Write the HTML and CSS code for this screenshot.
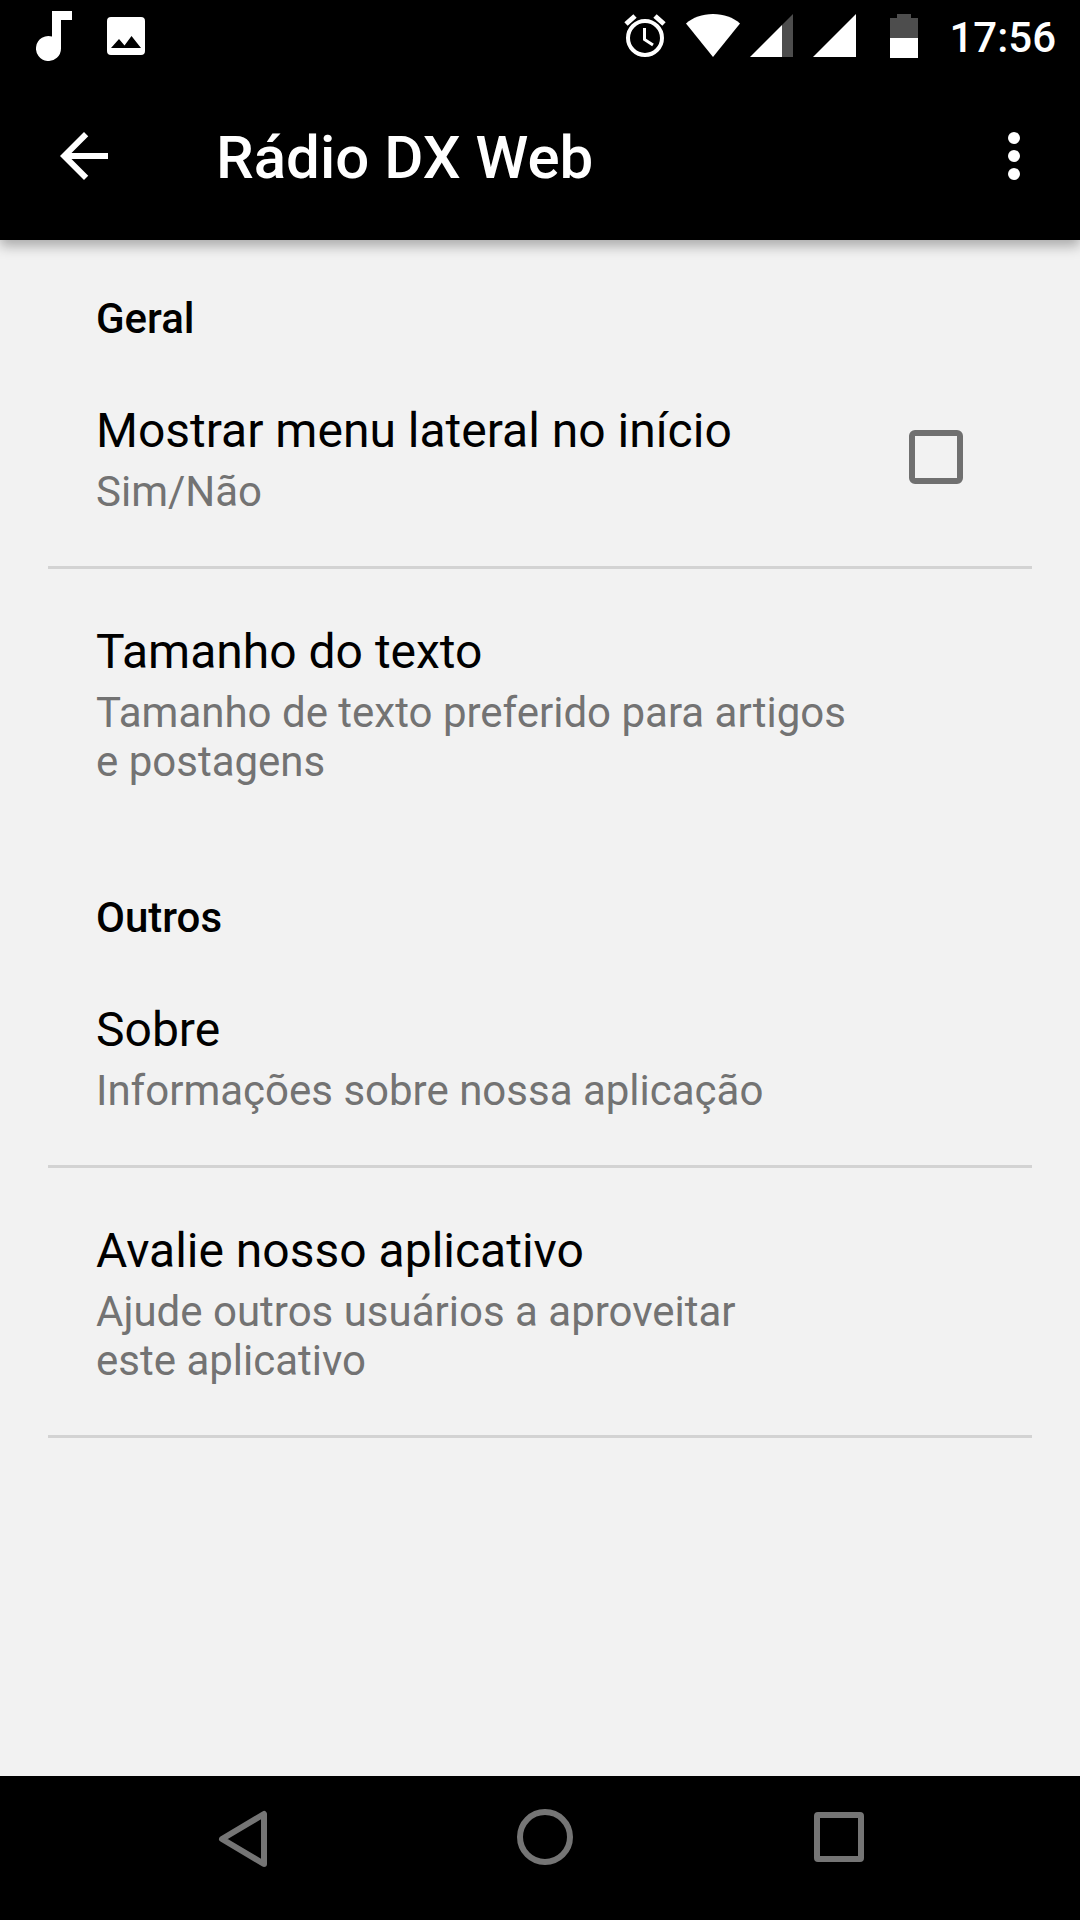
FILE: index.html
```html
<!DOCTYPE html>
<html lang="pt-BR">
<head>
    <meta charset="UTF-8">
    <meta name="viewport" content="width=device-width, initial-scale=1.0">
    <title>Rádio DX Web</title>
    <link rel="stylesheet" href="styles.css">
</head>
<body>

    <div class="status-bar">
        <div class="status-left">
            <svg class="icon-note" viewBox="0 0 36 50" aria-hidden="true">
                <path d="M16 0H36V9H25V37.500A12.500 12.500 0 1 1 16 25.500Z"/>
            </svg>
            <svg class="icon-photo" viewBox="0 0 38 38" aria-hidden="true">
                <path fill-rule="evenodd" d="M4 0H34A4 4 0 0 1 38 4V34A4 4 0 0 1 34 38H4A4 4 0 0 1 0 34V4A4 4 0 0 1 4 0ZM4 31H34L24.500 19 17.500 28.500 12 22Z"/>
            </svg>
        </div>
        <div class="status-right">
            <svg class="icon-alarm" viewBox="0 0 42 44" aria-hidden="true">
                <circle cx="21" cy="24" r="17" fill="none" stroke="#fff" stroke-width="4"/>
                <path d="M20.500 14V25.500L29 31" fill="none" stroke="#fff" stroke-width="3"/>
                <path d="M2 10L11 2M31 2L40 10" fill="none" stroke="#fff" stroke-width="5"/>
            </svg>
            <svg class="icon-wifi" viewBox="0 0 54 44" aria-hidden="true">
                <path d="M0 9.500C7 3.500 16 0 27 0S47 3.500 54 9.500L27 43Z"/>
            </svg>
            <svg class="icon-signal" viewBox="0 0 43 44" aria-hidden="true">
                <path class="dim" d="M32 11L43 0V43H32Z"/>
                <path d="M0 43L32 11V43Z"/>
            </svg>
            <svg class="icon-signal" viewBox="0 0 43 44" aria-hidden="true">
                <path d="M0 43L43 0V43Z"/>
            </svg>
            <svg class="icon-battery" viewBox="0 0 28 44" aria-hidden="true">
                <path class="dim" d="M7 0H21V4H28V24H0V4H7Z"/>
                <path d="M0 24H28V44H0Z"/>
            </svg>
            <span class="clock">17:56</span>
        </div>
    </div>

    <header class="app-bar">
        <button type="button" class="icon-button" aria-label="Voltar">
            <svg viewBox="0 0 24 24"><path d="M20 11H7.830l5.590-5.590L12 4l-8 8 8 8 1.410-1.410L7.830 13H20z"/></svg>
        </button>
        <h1>Rádio DX Web</h1>
        <button type="button" class="icon-button" aria-label="Mais opções">
            <svg viewBox="0 0 24 24"><circle cx="12" cy="6" r="2"/><circle cx="12" cy="12" r="2"/><circle cx="12" cy="18" r="2"/></svg>
        </button>
    </header>

    <main class="settings">
        <section>
            <h2>Geral</h2>
            <label class="row" for="show-menu">
                <span class="row-text">
                    <span class="row-title">Mostrar menu lateral no início</span>
                    <span class="row-summary">Sim/Não</span>
                </span>
                <input type="checkbox" id="show-menu" name="show-menu">
            </label>
            <button type="button" class="row last">
                <span class="row-text">
                    <span class="row-title">Tamanho do texto</span>
                    <span class="row-summary">Tamanho de texto preferido para artigos e postagens</span>
                </span>
            </button>
        </section>

        <section>
            <h2>Outros</h2>
            <button type="button" class="row">
                <span class="row-text">
                    <span class="row-title">Sobre</span>
                    <span class="row-summary">Informações sobre nossa aplicação</span>
                </span>
            </button>
            <button type="button" class="row">
                <span class="row-text">
                    <span class="row-title">Avalie nosso aplicativo</span>
                    <span class="row-summary">Ajude outros usuários a aproveitar<br>este aplicativo</span>
                </span>
            </button>
        </section>
    </main>

    <nav class="nav-bar">
        <button type="button" aria-label="Voltar">
            <svg viewBox="0 0 72 72"><path d="M58 11V61L16 36Z"/></svg>
        </button>
        <button type="button" aria-label="Início">
            <svg viewBox="0 0 72 72"><circle cx="41" cy="34" r="25"/></svg>
        </button>
        <button type="button" aria-label="Recentes">
            <svg viewBox="0 0 72 72"><rect x="15" y="12" width="44" height="44" rx="1"/></svg>
        </button>
    </nav>

</body>
</html>
```
FILE: styles.css
```css
* {
    margin: 0;
    padding: 0;
    box-sizing: border-box;
    font-family: Roboto, sans-serif;
}

body {
    min-height: 100vh;
    display: flex;
    flex-direction: column;
    background-color: #f2f2f2;
    color: #000;
}

svg {
    display: block;
    fill: currentColor;
}

button {
    border: none;
    background: none;
    color: inherit;
    cursor: pointer;
}

.status-bar {
    height: 72px;
    padding: 0 24px 0 36px;
    display: flex;
    justify-content: space-between;
    align-items: center;
    background-color: #000;
    color: #fff;
}

.status-left,
.status-right {
    display: flex;
    align-items: center;
}

.status-left {
    gap: 35px;
}

.status-right {
    gap: 20px;
}

.dim {
    fill: #4d4d4d;
}

.icon-note {
    width: 36px;
    height: 50px;
}

.icon-photo {
    width: 38px;
    height: 38px;
}

.icon-alarm {
    width: 42px;
    height: 44px;
}

.icon-wifi {
    width: 54px;
    height: 44px;
    margin-right: -10px;
}

.icon-signal {
    width: 43px;
    height: 44px;
}

.icon-battery {
    width: 28px;
    height: 44px;
    margin: 0 11px 0 14px;
}

.clock {
    padding-top: 4px;
    font-size: 42px;
    font-weight: 500;
    line-height: 48px;
}

.app-bar {
    height: 168px;
    padding: 0 30px 0 48px;
    display: flex;
    align-items: center;
    background-color: #000;
    color: #fff;
    box-shadow: 0 6px 12px rgba(0, 0, 0, 0.3);
}

.app-bar h1 {
    flex: 1;
    margin-left: 96px;
    padding-top: 4px;
    font-size: 60px;
    font-weight: 500;
    line-height: 72px;
}

.icon-button svg {
    width: 72px;
    height: 72px;
}

.settings {
    flex: 1;
    padding: 0 48px;
}

.settings h2 {
    padding: 54px 48px 5px;
    font-size: 42px;
    font-weight: 500;
    line-height: 49px;
}

.row {
    width: 100%;
    padding: 55px 48px 50px;
    display: flex;
    justify-content: space-between;
    align-items: center;
    border-bottom: 3px solid #d3d3d3;
    text-align: left;
    cursor: pointer;
}

.row.last {
    border-color: transparent;
}

.row-text {
    max-width: 768px;
    display: flex;
    flex-direction: column;
    gap: 8px;
}

.row-title {
    font-size: 48px;
    line-height: 56px;
}

.row-summary {
    color: #737373;
    font-size: 42px;
    line-height: 49px;
}

.row input {
    appearance: none;
    width: 54px;
    height: 54px;
    margin: 0 21px 5px 0;
    border: 6px solid #707070;
    border-radius: 6px;
}

.row input:checked {
    background-color: #707070;
}

.nav-bar {
    height: 144px;
    padding: 0 93px;
    display: flex;
    background-color: #000;
    color: #757575;
}

.nav-bar button {
    flex: 1;
    padding-bottom: 18px;
    display: flex;
    justify-content: center;
    align-items: center;
}

.nav-bar svg {
    width: 72px;
    height: 72px;
    fill: none;
    stroke: currentColor;
    stroke-width: 6;
    stroke-linejoin: round;
}
```
